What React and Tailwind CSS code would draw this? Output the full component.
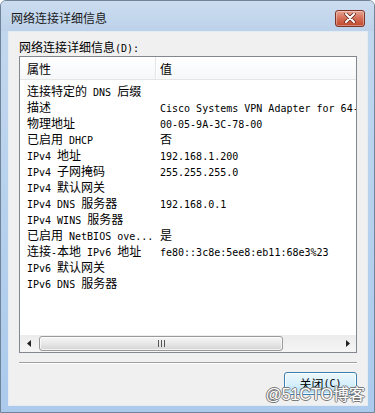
import React from "react";

// 网络连接详细信息 – Windows 7 style details dialog

const rows = [
  ["连接特定的 DNS 后缀", ""],
  ["描述", "Cisco Systems VPN Adapter for 64-bit Windows"],
  ["物理地址", "00-05-9A-3C-78-00"],
  ["已启用 DHCP", "否"],
  ["IPv4 地址", "192.168.1.200"],
  ["IPv4 子网掩码", "255.255.255.0"],
  ["IPv4 默认网关", ""],
  ["IPv4 DNS 服务器", "192.168.0.1"],
  ["IPv4 WINS 服务器", ""],
  ["已启用 NetBIOS ove...", "是"],
  ["连接-本地 IPv6 地址", "fe80::3c8e:5ee8:eb11:68e3%23"],
  ["IPv6 默认网关", ""],
  ["IPv6 DNS 服务器", ""],
];

// SimSun look: CJK glyphs 12px wide, latin glyphs 6px wide
function Mixed({ text }) {
  const parts = text.split(/([\u3000-\u9fff\uff00-\uffef]+)/).filter(Boolean);
  return parts.map((p, i) =>
    /[\u3000-\u9fff\uff00-\uffef]/.test(p) ? (
      <span key={i} className="font-['Noto_Sans_CJK_SC',sans-serif] text-[12px]">
        {p}
      </span>
    ) : (
      <span key={i} className="font-['DejaVu_Sans_Mono',monospace] text-[10px]">
        {p}
      </span>
    ),
  );
}

function CloseButton() {
  return (
    <div className="flex h-[17px] w-[30px] items-center justify-center rounded-[3px] border border-[#7d3426] bg-gradient-to-b from-[#e6a394] via-[#d46d55] to-[#c0462b] shadow-[inset_0_0_0_1px_rgba(255,255,255,0.35)]">
      <svg width="12" height="10" viewBox="0 0 12 10">
        <path d="M2 1 L10 9 M10 1 L2 9" stroke="#5a2015" strokeWidth="3.4" strokeLinecap="round" />
        <path d="M2 1 L10 9 M10 1 L2 9" stroke="#ffffff" strokeWidth="2" strokeLinecap="round" />
      </svg>
    </div>
  );
}

function ScrollBar() {
  return (
    <div className="flex h-[17px] items-center bg-gradient-to-b from-[#ececec] to-[#f5f5f5]">
      <div className="flex h-full w-[17px] items-center justify-center">
        <svg width="4" height="7" viewBox="0 0 4 7">
          <path d="M4 0 L0 3.5 L4 7 Z" fill="#222" />
        </svg>
      </div>
      <div className="ml-[2px] flex h-[15px] w-[244px] items-center justify-center rounded-[3px] border border-[#9a9a9a] bg-gradient-to-b from-[#f6f6f6] via-[#e8e8e8] to-[#d4d4d4] shadow-[inset_0_0_0_1px_rgba(255,255,255,0.7)]">
        <svg width="7" height="7" viewBox="0 0 7 7">
          <path d="M0.5 0 V7 M3.5 0 V7 M6.5 0 V7" stroke="#555" strokeWidth="1" />
        </svg>
      </div>
      <div className="flex-1" />
      <div className="flex h-full w-[17px] items-center justify-center">
        <svg width="4" height="7" viewBox="0 0 4 7">
          <path d="M0 0 L4 3.5 L0 7 Z" fill="#222" />
        </svg>
      </div>
    </div>
  );
}

export default function App() {
  return (
    <div className="relative flex h-[413px] w-[375px] flex-col overflow-hidden rounded-t-[6px] border border-[#6f8399] bg-gradient-to-b from-[#c3d8ee] to-[#abcaec] text-black">
      {/* title bar */}
      <div className="flex h-[30px] shrink-0 items-center justify-between bg-gradient-to-b from-[#cbdcef] to-[#bcd2ea] pl-[10px] pr-[9px] pt-[4px]">
        <span className="font-['Noto_Sans_CJK_SC',sans-serif] text-[12px] leading-[16px] text-[#1b1b1b]">
          网络连接详细信息
        </span>
        <CloseButton />
      </div>

      {/* client area */}
      <div className="mb-[6px] ml-[7px] mr-[6px] flex flex-1 flex-col border border-[#e3ebf4] bg-[#f0f0f0] px-[10px] pt-[6px]">
        <div className="h-[16px] leading-[16px] whitespace-pre">
          <Mixed text="网络连接详细信息(D):" />
        </div>

        {/* list view */}
        <div className="mt-[2px] flex h-[297px] flex-col overflow-hidden border border-[#828790] bg-white">
          <div className="flex h-[23px] shrink-0 border-b border-[#e5e5e5] bg-gradient-to-b from-white to-[#f6f7f9] leading-[22px]">
            <div className="w-[136px] border-r border-[#e3e5e8] pl-[7px]">
              <Mixed text="属性" />
            </div>
            <div className="flex-1 border-l border-white pl-[3px]">
              <Mixed text="值" />
            </div>
          </div>

          <div className="flex-1 overflow-hidden pt-[2px]">
            {rows.map(([k, v]) => (
              <div key={k} className="flex h-[16px] leading-[16px]">
                <div className="w-[136px] shrink-0 overflow-hidden whitespace-pre pl-[7px]">
                  <Mixed text={k} />
                </div>
                <div className="min-w-0 flex-1 overflow-hidden whitespace-pre pl-[4px]">
                  <Mixed text={v} />
                </div>
              </div>
            ))}
          </div>

          <ScrollBar />
        </div>

        {/* separator */}
        <div className="mt-[9px] h-[2px] border-t border-[#a0a0a0] border-b-white border-b" />

        {/* close button */}
        <div className="mt-[8px] flex justify-end">
          <div className="flex h-[23px] w-[73px] items-center justify-center rounded-[3px] border border-[#3c7fb1] bg-gradient-to-b from-[#ecf7fd] via-[#d9f0fc] to-[#b2dff7] shadow-[inset_0_0_0_1px_rgba(255,255,255,0.8)] leading-[16px] whitespace-pre">
            <Mixed text="关闭(C)" />
          </div>
        </div>
      </div>

      {/* watermark */}
      <div className="absolute bottom-[8px] right-[9px] font-['Liberation_Sans','Noto_Sans_CJK_SC',sans-serif] text-[16px] leading-[18px] text-white [text-shadow:1px_0_#7a7a7a,-1px_0_#7a7a7a,0_1px_#7a7a7a,0_-1px_#7a7a7a]">
        @51CTO博客
      </div>
    </div>
  );
}
